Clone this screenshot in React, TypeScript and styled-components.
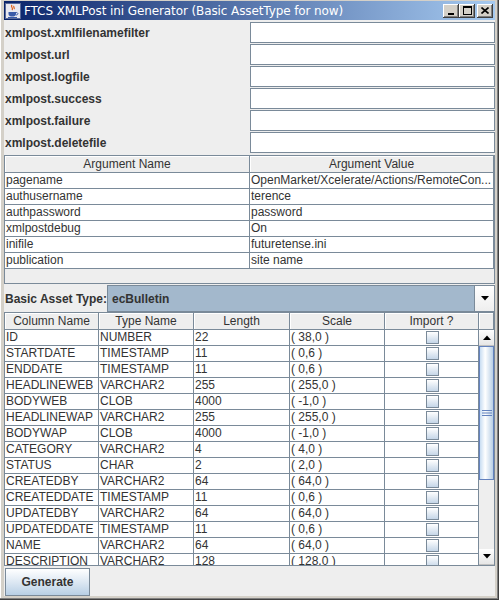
import React from "react";
import styled, { createGlobalStyle } from "styled-components";

const GlobalStyle = createGlobalStyle`
  html, body { margin: 0; padding: 0; background: #d4d0c8; }
  * { box-sizing: border-box; }
`;

const FONT = `"Liberation Sans", Arial, sans-serif`;

const Frame = styled.div`
  width: 499px;
  height: 600px;
  background: #d4d0c8;
  padding: 1px 4px 4px 4px;
  display: flex;
  flex-direction: column;
  box-shadow: inset -1px -1px 0 #404040, inset -2px -2px 0 #808080, inset 1px 0 0 #ffffff;
  font-family: ${FONT};
  overflow: hidden;
`;

const TitleBar = styled.div`
  height: 19px;
  flex: none;
  display: flex;
  align-items: center;
  padding: 0 2px 0 1px;
  background: linear-gradient(to right, #0a246a, #a6caf0);
`;

const TitleText = styled.span`
  color: #ffffff;
  font-family: "DejaVu Sans", Tahoma, sans-serif;
  font-size: 12px;
  margin-left: 3px;
  flex: 1;
  white-space: nowrap;
  letter-spacing: -0.1px;
`;

const WinButtons = styled.div`
  display: flex;
  align-items: center;
`;

const WinButton = styled.div<{ $gap?: boolean }>`
  width: 16px;
  height: 14px;
  background: #d4d0c8;
  margin-left: ${(p) => (p.$gap ? "2px" : "0")};
  box-shadow: inset -1px -1px 0 #404040, inset 1px 1px 0 #ffffff, inset -2px -2px 0 #808080;
  display: flex;
  align-items: center;
  justify-content: center;
`;

const Content = styled.div`
  flex: 1;
  background: #eeeeee;
  display: flex;
  flex-direction: column;
  padding-top: 2px;
`;

const Form = styled.div`
  display: grid;
  grid-template-columns: 246px 1fr;
  grid-auto-rows: 22px;
`;

const Label = styled.div`
  font-weight: bold;
  font-size: 12px;
  color: #333333;
  padding-left: 1px;
  display: flex;
  align-items: center;
  white-space: nowrap;
`;

const Field = styled.div`
  height: 21px;
  background: #ffffff;
  border: 1px solid #7a8a99;
  box-shadow: inset 1px 1px 0 #ffffff;
`;

const ArgPane = styled.div`
  margin-top: 1px;
  height: 129px;
  border: 1px solid #7a8a99;
  background: #eeeeee;
  flex: none;
`;

const HeaderRow = styled.div<{ $cols: string }>`
  display: grid;
  grid-template-columns: ${(p) => p.$cols};
  height: 17px;
`;

const HeaderCell = styled.div`
  font-size: 12px;
  color: #333333;
  text-align: center;
  line-height: 16px;
  background: #eeeeee;
  border-right: 1px solid #7a8a99;
  border-bottom: 1px solid #7a8a99;
  box-shadow: inset 1px 1px 0 #ffffff;
  white-space: nowrap;
  overflow: hidden;
`;

const Row = styled.div<{ $cols: string }>`
  display: grid;
  grid-template-columns: ${(p) => p.$cols};
  height: 16px;
  background: #ffffff;
`;

const Cell = styled.div<{ $center?: boolean }>`
  font-size: 12px;
  color: #333333;
  line-height: 15px;
  padding-left: 1px;
  border-right: 1px solid #7a8a99;
  border-bottom: 1px solid #7a8a99;
  white-space: nowrap;
  overflow: hidden;
  display: ${(p) => (p.$center ? "flex" : "block")};
  justify-content: center;
  align-items: center;
`;

const ComboRow = styled.div`
  height: 28px;
  flex: none;
  display: flex;
  align-items: center;
  padding: 1px 0 0 0;
`;

const ComboLabel = styled.div`
  width: 103px;
  flex: none;
  font-weight: bold;
  font-size: 12px;
  color: #333333;
  padding-left: 1px;
  white-space: nowrap;
`;

const Combo = styled.div`
  flex: 1;
  height: 27px;
  display: flex;
  border: 1px solid #7a8a99;
  background: #a3b8cc;
`;

const ComboText = styled.div`
  flex: 1;
  font-weight: bold;
  font-size: 12px;
  color: #333333;
  padding-left: 4px;
  display: flex;
  align-items: center;
`;

const ComboArrow = styled.div`
  width: 20px;
  background: linear-gradient(#ffffff, #eeeeee);
  border-left: 1px solid #7a8a99;
  display: flex;
  align-items: center;
  justify-content: center;
`;

const AssetPane = styled.div`
  height: 254px;
  flex: none;
  border: 1px solid #7a8a99;
  background: #eeeeee;
  display: flex;
  flex-direction: column;
`;

const AssetBody = styled.div`
  flex: 1;
  display: flex;
  overflow: hidden;
`;

const Rows = styled.div`
  flex: 1;
  overflow: hidden;
  background: #ffffff;
`;

const ScrollBar = styled.div`
  width: 16px;
  display: flex;
  flex-direction: column;
  background: #eeeeee;
  border-left: 1px solid #7a8a99;
`;

const ScrollButton = styled.div`
  height: 16px;
  flex: none;
  background: linear-gradient(#ffffff, #e6e6e6);
  border-bottom: 1px solid #c0c0c0;
  display: flex;
  align-items: center;
  justify-content: center;
`;

const Thumb = styled.div`
  height: 134px;
  flex: none;
  background: linear-gradient(to right, #c8ddf2, #ffffff 40%, #b8cfe5);
  border: 1px solid #6382be;
  display: flex;
  align-items: center;
  justify-content: center;
`;

const Track = styled.div`
  flex: 1;
  background: #eeeeee;
`;

const CheckBox = styled.div`
  width: 13px;
  height: 13px;
  border: 1px solid #7a8a99;
  background: linear-gradient(#ffffff, #c5d6e8);
`;

const ButtonBar = styled.div`
  flex: 1;
  display: flex;
  align-items: flex-start;
  padding: 2px 0 0 1px;
`;

const Button = styled.div`
  width: 85px;
  height: 28px;
  border: 1px solid #7a8a99;
  background: linear-gradient(#ffffff, #dde8f3 50%, #b8cfe5);
  font-weight: bold;
  font-size: 12px;
  color: #333333;
  display: flex;
  align-items: center;
  justify-content: center;
`;

const ARG_COLS = "245px 1fr";
const ASSET_COLS = "94px 95px 96px 95px 94px";
const ASSET_HEAD_COLS = "94px 95px 96px 95px 94px 1fr";

const formFields = [
  "xmlpost.xmlfilenamefilter",
  "xmlpost.url",
  "xmlpost.logfile",
  "xmlpost.success",
  "xmlpost.failure",
  "xmlpost.deletefile",
];

const args: [string, string][] = [
  ["pagename", "OpenMarket/Xcelerate/Actions/RemoteCon..."],
  ["authusername", "terence"],
  ["authpassword", "password"],
  ["xmlpostdebug", "On"],
  ["inifile", "futuretense.ini"],
  ["publication", "site name"],
];

const assets: [string, string, string, string][] = [
  ["ID", "NUMBER", "22", "( 38,0 )"],
  ["STARTDATE", "TIMESTAMP", "11", "( 0,6 )"],
  ["ENDDATE", "TIMESTAMP", "11", "( 0,6 )"],
  ["HEADLINEWEB", "VARCHAR2", "255", "( 255,0 )"],
  ["BODYWEB", "CLOB", "4000", "( -1,0 )"],
  ["HEADLINEWAP", "VARCHAR2", "255", "( 255,0 )"],
  ["BODYWAP", "CLOB", "4000", "( -1,0 )"],
  ["CATEGORY", "VARCHAR2", "4", "( 4,0 )"],
  ["STATUS", "CHAR", "2", "( 2,0 )"],
  ["CREATEDBY", "VARCHAR2", "64", "( 64,0 )"],
  ["CREATEDDATE", "TIMESTAMP", "11", "( 0,6 )"],
  ["UPDATEDBY", "VARCHAR2", "64", "( 64,0 )"],
  ["UPDATEDDATE", "TIMESTAMP", "11", "( 0,6 )"],
  ["NAME", "VARCHAR2", "64", "( 64,0 )"],
  ["DESCRIPTION", "VARCHAR2", "128", "( 128,0 )"],
];

const JavaIcon = () => (
  <svg width="16" height="16" viewBox="0 0 16 16">
    <rect x="0.5" y="0.5" width="15" height="15" fill="#e8e8f0" stroke="#5a6a9a" />
    <path d="M7 2 C5 4 9 5 7 7 M9 3 C8 4 10 5 9 6" stroke="#e05a10" strokeWidth="1.2" fill="none" />
    <path d="M3.5 9 H11 V11 C11 13 9 13.5 7.3 13.5 C5.5 13.5 3.5 13 3.5 11 Z" fill="#3a5aa8" />
    <path d="M11 9.5 C13.5 9.5 13.5 12 11 12" stroke="#3a5aa8" fill="none" />
    <rect x="3" y="14" width="9" height="1" fill="#3a5aa8" />
  </svg>
);

const TriangleDown = () => (
  <svg width="8" height="5" viewBox="0 0 8 5">
    <path d="M0 0 H8 L4 4.5 Z" fill="#000" />
  </svg>
);

const TriangleUp = () => (
  <svg width="8" height="5" viewBox="0 0 8 5">
    <path d="M0 5 H8 L4 0.5 Z" fill="#000" />
  </svg>
);

const Grip = () => (
  <svg width="10" height="6" viewBox="0 0 10 6">
    <rect x="0" y="0" width="10" height="1" fill="#6382be" />
    <rect x="0" y="2.5" width="10" height="1" fill="#6382be" />
    <rect x="0" y="5" width="10" height="1" fill="#6382be" />
  </svg>
);

export default function App() {
  return (
    <>
      <GlobalStyle />
      <Frame>
        <TitleBar>
          <JavaIcon />
          <TitleText>FTCS XMLPost ini Generator (Basic AssetType for now)</TitleText>
          <WinButtons>
            <WinButton>
              <svg width="8" height="8" viewBox="0 0 8 8">
                <rect x="1" y="6" width="6" height="2" fill="#000" />
              </svg>
            </WinButton>
            <WinButton>
              <svg width="9" height="9" viewBox="0 0 9 9">
                <rect x="0.5" y="0.5" width="8" height="8" fill="none" stroke="#000" />
                <rect x="0" y="0" width="9" height="2" fill="#000" />
              </svg>
            </WinButton>
            <WinButton $gap>
              <svg width="8" height="7" viewBox="0 0 8 7">
                <path d="M0.5 0.5 L7.5 6.5 M7.5 0.5 L0.5 6.5" stroke="#000" strokeWidth="1.6" />
              </svg>
            </WinButton>
          </WinButtons>
        </TitleBar>
        <Content>
          <Form>
            {formFields.map((f) => (
              <React.Fragment key={f}>
                <Label>{f}</Label>
                <Field />
              </React.Fragment>
            ))}
          </Form>
          <ArgPane>
            <HeaderRow $cols={ARG_COLS}>
              <HeaderCell>Argument Name</HeaderCell>
              <HeaderCell>Argument Value</HeaderCell>
            </HeaderRow>
            {args.map(([n, v]) => (
              <Row key={n} $cols={ARG_COLS}>
                <Cell>{n}</Cell>
                <Cell>{v}</Cell>
              </Row>
            ))}
          </ArgPane>
          <ComboRow>
            <ComboLabel>Basic Asset Type:</ComboLabel>
            <Combo>
              <ComboText>ecBulletin</ComboText>
              <ComboArrow>
                <TriangleDown />
              </ComboArrow>
            </Combo>
          </ComboRow>
          <AssetPane>
            <HeaderRow $cols={ASSET_HEAD_COLS}>
              <HeaderCell>Column Name</HeaderCell>
              <HeaderCell>Type Name</HeaderCell>
              <HeaderCell>Length</HeaderCell>
              <HeaderCell>Scale</HeaderCell>
              <HeaderCell>Import ?</HeaderCell>
              <HeaderCell />
            </HeaderRow>
            <AssetBody>
              <Rows>
                {assets.map(([c, t, l, s]) => (
                  <Row key={c} $cols={ASSET_COLS}>
                    <Cell>{c}</Cell>
                    <Cell>{t}</Cell>
                    <Cell>{l}</Cell>
                    <Cell>{s}</Cell>
                    <Cell $center>
                      <CheckBox />
                    </Cell>
                  </Row>
                ))}
              </Rows>
              <ScrollBar>
                <ScrollButton>
                  <TriangleUp />
                </ScrollButton>
                <Thumb>
                  <Grip />
                </Thumb>
                <Track />
                <ScrollButton>
                  <TriangleDown />
                </ScrollButton>
              </ScrollBar>
            </AssetBody>
          </AssetPane>
          <ButtonBar>
            <Button>Generate</Button>
          </ButtonBar>
        </Content>
      </Frame>
    </>
  );
}
